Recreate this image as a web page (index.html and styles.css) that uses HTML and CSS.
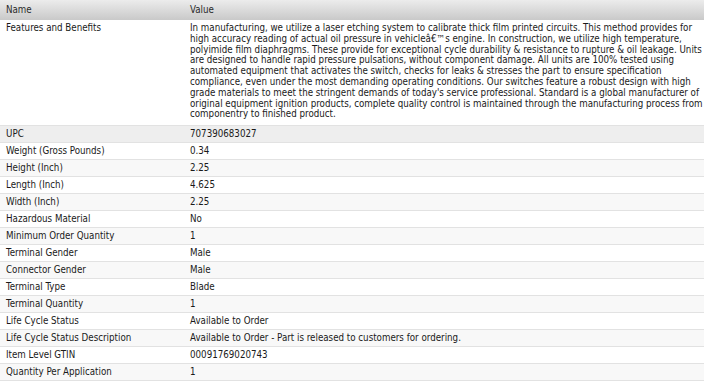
FILE: index.html
```html
<!DOCTYPE html>
<html>
<head>
<meta charset="utf-8">
<link rel="stylesheet" href="styles.css">
</head>
<body>
<table class="spec">
  <thead>
    <tr class="head"><th class="name">Name</th><th class="value">Value</th></tr>
  </thead>
  <tbody>
    <tr class="long"><td class="name">Features and Benefits</td><td class="value">In manufacturing, we utilize a laser etching system to calibrate thick film printed circuits. This method provides for high accuracy reading of actual oil pressure in vehicleâ€™s engine. In construction, we utilize high temperature, polyimide film diaphragms. These provide for exceptional cycle durability &amp; resistance to rupture &amp; oil leakage. Units are designed to handle rapid pressure pulsations, without component damage. All units are 100% tested using automated equipment that activates the switch, checks for leaks &amp; stresses the part to ensure specification compliance, even under the most demanding operating conditions. Our switches feature a robust design with high grade materials to meet the stringent demands of today's service professional. Standard is a global manufacturer of original equipment ignition products, complete quality control is maintained through the manufacturing process from componentry to finished product.</td></tr>
    <tr class="sel"><td class="name">UPC</td><td class="value">707390683027</td></tr>
    <tr><td class="name">Weight (Gross Pounds)</td><td class="value">0.34</td></tr>
    <tr class="alt"><td class="name">Height (Inch)</td><td class="value">2.25</td></tr>
    <tr><td class="name">Length (Inch)</td><td class="value">4.625</td></tr>
    <tr class="alt"><td class="name">Width (Inch)</td><td class="value">2.25</td></tr>
    <tr><td class="name">Hazardous Material</td><td class="value">No</td></tr>
    <tr class="alt"><td class="name">Minimum Order Quantity</td><td class="value">1</td></tr>
    <tr><td class="name">Terminal Gender</td><td class="value">Male</td></tr>
    <tr class="alt"><td class="name">Connector Gender</td><td class="value">Male</td></tr>
    <tr><td class="name">Terminal Type</td><td class="value">Blade</td></tr>
    <tr class="alt"><td class="name">Terminal Quantity</td><td class="value">1</td></tr>
    <tr><td class="name">Life Cycle Status</td><td class="value">Available to Order</td></tr>
    <tr class="alt"><td class="name">Life Cycle Status Description</td><td class="value">Available to Order - Part is released to customers for ordering.</td></tr>
    <tr><td class="name">Item Level GTIN</td><td class="value">00091769020743</td></tr>
    <tr class="alt"><td class="name">Quantity Per Application</td><td class="value">1</td></tr>
  </tbody>
</table>
</body>
</html>
```

FILE: styles.css
```css
html, body {
  margin: 0;
  padding: 0;
  background: #ffffff;
}

.spec {
  width: 704px;
  border-collapse: collapse;
  table-layout: fixed;
  font-family: "DejaVu Sans Condensed", "DejaVu Sans", sans-serif;
  font-size: 9.7px;
  line-height: 10.8px;
  color: #1a1a1a;
}

.spec th,
.spec td {
  text-align: left;
  vertical-align: middle;
  padding: 0 6px;
  font-weight: normal;
}

.spec .name {
  width: 172px;
}

.spec .value {
  padding-right: 1px;
}

.head th {
  height: 20px;
  background: linear-gradient(#ececec, #c9c9c9);
  color: #2a2a2a;
}

.spec td {
  height: 16px;
  border-bottom: 1px solid #e2e2e2;
}

.long td {
  height: auto;
  vertical-align: top;
  padding-top: 3px;
  padding-bottom: 5px;
}

.spec .sel td {
  background: #eeeeee;
  border-top: 1px solid #dcdcdc;
}

.spec .alt td {
  background: #f8f8f8;
}
```
